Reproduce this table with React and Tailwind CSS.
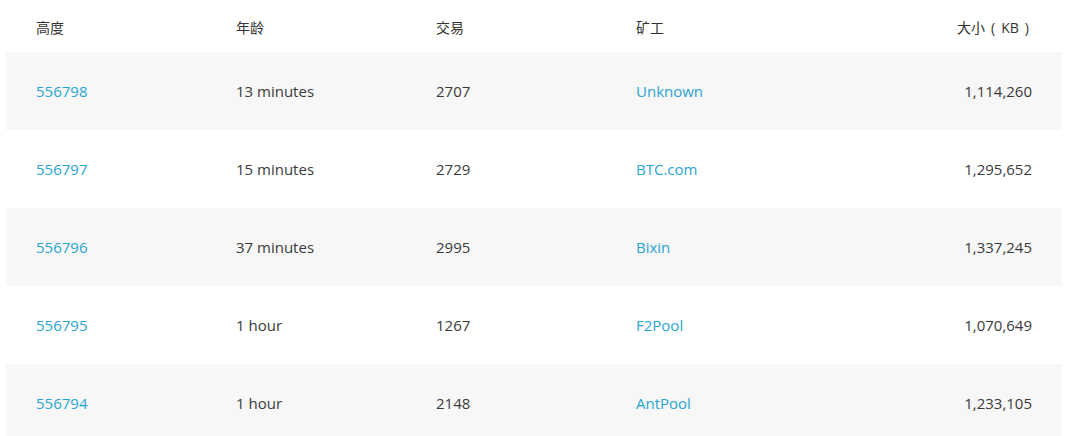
const rows = [
  { height: "556798", age: "13 minutes", tx: "2707", miner: "Unknown", size: "1,114,260" },
  { height: "556797", age: "15 minutes", tx: "2729", miner: "BTC.com", size: "1,295,652" },
  { height: "556796", age: "37 minutes", tx: "2995", miner: "Bixin", size: "1,337,245" },
  { height: "556795", age: "1 hour", tx: "1267", miner: "F2Pool", size: "1,070,649" },
  { height: "556794", age: "1 hour", tx: "2148", miner: "AntPool", size: "1,233,105" },
];

export default function App() {
  return (
    <div className="h-[436px] overflow-hidden bg-white pl-[6px] pr-[14px] text-[#3a3a3a] font-['Open_Sans','Noto_Sans_CJK_SC',sans-serif]">
      <div className="grid h-[52px] grid-cols-[200px_200px_200px_200px_1fr] items-center px-[30px] pt-[2px] text-[14px] text-[#333]">
        <div>高度</div>
        <div>年龄</div>
        <div>交易</div>
        <div>矿工</div>
        <div className="text-right">
          大小<span className="ml-[6px] mr-[6px]">(</span>KB<span className="ml-[6px] mr-[3px]">)</span>
        </div>
      </div>
      {rows.map((r, i) => (
        <div
          key={r.height}
          className={`grid h-[78px] grid-cols-[200px_200px_200px_200px_1fr] items-center px-[30px] text-[15px] ${i % 2 === 0 ? "bg-[#f7f7f7]" : "bg-white"}`}
        >
          <a className="text-[#2aa5d2]">{r.height}</a>
          <div>{r.age}</div>
          <div>{r.tx}</div>
          <a className="text-[#2aa5d2]">{r.miner}</a>
          <div className="text-right">{r.size}</div>
        </div>
      ))}
    </div>
  );
}
